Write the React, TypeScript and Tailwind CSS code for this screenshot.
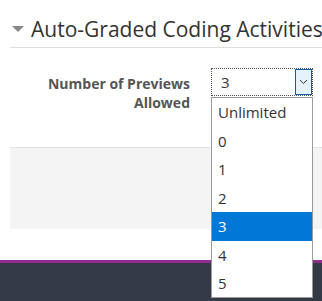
const options = ["Unlimited", "0", "1", "2", "3", "4", "5"];

export default function App() {
  const selected = "3";

  return (
    <div
      className="relative w-[322px] h-[301px] overflow-hidden bg-white flex flex-col"
      style={{ fontFamily: '"Open Sans", sans-serif' }}
    >
      {/* Section header */}
      <div className="ml-[10px] mt-[14px] h-[34px] flex items-start border-b border-[#dddddd]">
        <svg width="12" height="7" viewBox="0 0 12 7" className="ml-[2px] mt-[12px] shrink-0">
          <path d="M0 0 L12 0 L6 6 Z" fill="#888888" />
        </svg>
        <span className="ml-[7px] text-[21px] leading-[30px] text-[#333333] whitespace-nowrap">
          Auto-Graded Coding Activities
        </span>
      </div>

      {/* Form row */}
      <div className="flex items-start mt-[20px] h-[79px]">
        <label className="w-[190px] text-right text-[14px] leading-[19px] font-bold text-[#555555] pt-[6px]">
          Number of Previews
          <br />
          Allowed
        </label>
        <div className="ml-[21px] w-[102px] h-[28px] flex border border-dotted border-[#555555]">
          <span className="flex-1 pl-[9px] text-[15px] leading-[26px] text-[#333333]">{selected}</span>
          <span className="w-[17px] h-[26px] border border-[#0063b1] bg-[#e5f1fb] flex items-center justify-center">
            <svg width="9" height="6" viewBox="0 0 9 6">
              <path d="M1 1 L4.5 4.5 L8 1" fill="none" stroke="#333333" strokeWidth="1" />
            </svg>
          </span>
        </div>
      </div>

      {/* Grey footer panel */}
      <div className="ml-[10px] h-[82px] bg-[#f4f4f4] border-t border-[#e3e3e3]" />

      <div className="h-[31px]" />
      <div className="h-[3px] bg-[#8e2b8e]" />
      <div className="flex-1 bg-[#343a46]" />

      {/* Open dropdown list */}
      <ul className="absolute left-[211px] top-[97px] w-[102px] h-[201px] bg-white border border-[#9a9a9a]">
        {options.map((o) => (
          <li
            key={o}
            className={
              o === selected
                ? "h-[28.5px] pl-[6px] flex items-center text-[15px] bg-[#0078d7] text-white"
                : "h-[28.5px] pl-[6px] flex items-center text-[15px] text-[#333333]"
            }
          >
            {o}
          </li>
        ))}
      </ul>
    </div>
  );
}
